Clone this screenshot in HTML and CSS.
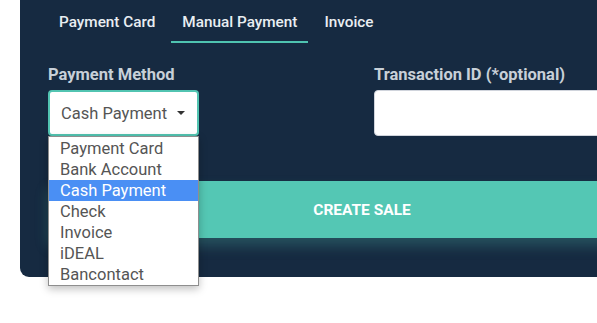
FILE: index.html
```html
<!DOCTYPE html>
<html lang="en">
<head>
    <meta charset="UTF-8">
    <meta name="viewport" content="width=device-width, initial-scale=1.0">
    <title>Create Sale</title>
    <link rel="stylesheet" href="styles.css">
</head>
<body>
    <div class="panel">
        <!-- Tabs -->
        <div class="tabs">
            <div class="tab">Payment Card</div>
            <div class="tab active">Manual Payment</div>
            <div class="tab">Invoice</div>
        </div>

        <!-- Fields -->
        <div class="fields">
            <div class="field method">
                <div class="label">Payment Method</div>
                <div class="select">
                    <span>Cash Payment</span>
                    <span class="caret"></span>
                </div>
                <div class="options">
                    <div class="option">Payment Card</div>
                    <div class="option">Bank Account</div>
                    <div class="option selected">Cash Payment</div>
                    <div class="option">Check</div>
                    <div class="option">Invoice</div>
                    <div class="option">iDEAL</div>
                    <div class="option">Bancontact</div>
                </div>
            </div>
            <div class="field transaction">
                <div class="label">Transaction ID (*optional)</div>
                <input class="input" type="text">
            </div>
        </div>

        <button class="create">CREATE SALE</button>
    </div>
</body>
</html>
```

FILE: styles.css
```css
body {
    margin: 0;
    background: #fff;
    font-family: Roboto, 'Liberation Sans', Arial, sans-serif;
    overflow: hidden;
    width: 597px;
    height: 323px;
}

.panel {
    margin-left: 20px;
    width: 700px;
    height: 277px;
    box-sizing: border-box;
    padding-left: 28px;
    background-color: #162a41;
    border-bottom-left-radius: 9px;
}

.tabs {
    display: flex;
    gap: 5px;
}

.tab {
    padding: 13px 11px 0;
    height: 28px;
    line-height: 18px;
    font-size: 15.3px;
    font-weight: 500;
    color: #e9eef2;
    border-bottom: 2px solid transparent;
}

.tab.active {
    border-bottom-color: #4fc3b0;
}

.fields {
    display: flex;
    gap: 175px;
    margin-top: 22px;
}

.field {
    position: relative;
}

.method {
    width: 151px;
}

.transaction {
    flex: 1;
}

.label {
    font-size: 16.5px;
    font-weight: 700;
    color: #c8d0d8;
    line-height: 20px;
    margin-bottom: 5px;
}

.select {
    height: 46px;
    box-sizing: border-box;
    border: 2px solid #52c4b1;
    border-radius: 4px;
    background: #fff;
    display: flex;
    align-items: center;
    justify-content: space-between;
    padding: 0 12px 0 11px;
    font-size: 16.5px;
    color: #555;
}

.caret {
    width: 0;
    height: 0;
    border-left: 4px solid transparent;
    border-right: 4px solid transparent;
    border-top: 4px solid #333;
}

.input {
    display: block;
    width: 100%;
    height: 46px;
    box-sizing: border-box;
    border: 1px solid #d0d4dc;
    border-radius: 4px;
    background: #fff;
}

.options {
    position: absolute;
    left: 0;
    top: 71px;
    width: 151px;
    box-sizing: border-box;
    padding-top: 1px;
    background: #fff;
    border: 1px solid #8e8e8e;
    box-shadow: 0 3px 8px rgba(0, 0, 0, 0.25);
    z-index: 2;
}

.option {
    height: 21px;
    line-height: 21px;
    padding-left: 11px;
    font-size: 16.5px;
    color: #555;
}

.option.selected {
    background: #4a8ff4;
    color: #fff;
}

.create {
    display: block;
    margin-top: 45px;
    width: 628px;
    height: 57px;
    border: none;
    background: #54c7b4;
    color: #fff;
    font-family: inherit;
    font-size: 15.5px;
    font-weight: 700;
    box-shadow: 0 8px 12px rgba(84, 199, 180, 0.25);
}
```
